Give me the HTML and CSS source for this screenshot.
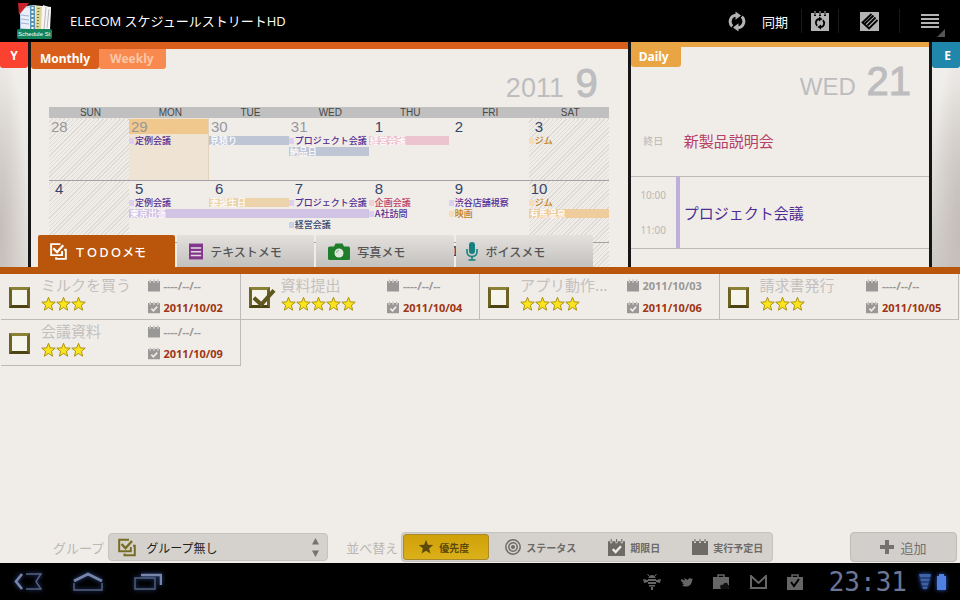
FILE: index.html
```html
<!DOCTYPE html>
<html lang="ja">
<head>
<meta charset="utf-8">
<title>ELECOM スケジュールストリートHD</title>
<link rel="stylesheet" href="styles.css">
</head>
<body>
<svg class="defs" aria-hidden="true">
  <defs>
    <linearGradient id="cover" x1="0" y1="0" x2="1" y2="0"><stop offset="0" stop-color="#8fb4dc"/><stop offset=".5" stop-color="#f4f2e4"/><stop offset="1" stop-color="#ffffff"/></linearGradient>
    <symbol id="i-sync" viewBox="0 0 18 20"><g fill="none" stroke="currentColor" stroke-width="3"><path d="M8 3.800C2.500 4 .2 11 4.200 14.800"/><path d="M10 16.200c5.500-.2 7.800-7.200 3.800-11"/></g><path fill="currentColor" d="M7.500 0l5.500 4-5.500 4.200zM10.500 20L5 16l5.500-4.200z"/></symbol>
    <symbol id="i-cal" viewBox="0 0 16 16"><path fill="currentColor" fill-rule="evenodd" d="M0 2h2v2h2V2h3v2h2V2h3v2h2V2h2v14H0z"/><path fill="currentColor" d="M2.500 0h1v3h-1zM7.500 0h1v3h-1zM12.500 0h1v3h-1z"/></symbol>
    <symbol id="i-calcheck" viewBox="0 0 16 16"><use href="#i-cal" width="16" height="16"/><path d="M4.500 9.500l2.700 2.800 5-5.500" fill="none" stroke="#eeebe7" stroke-width="2.200"/></symbol>
    <symbol id="i-star" viewBox="0 0 16 16"><path d="M8 .8l1.900 4.900 5.300.3-4.100 3.400 1.300 5.200L8 11.700l-4.400 2.900 1.300-5.200L.8 6l5.300-.3z"/></symbol>
    <symbol id="i-memo" viewBox="0 0 18 18"><path d="M11 1.200H1.200v11.600h11.600V8.500" fill="none" stroke="currentColor" stroke-width="2"/><path d="M15 7.200h1.800v9.600H6.500V15" fill="none" stroke="currentColor" stroke-width="2"/><path d="M3.500 5.500l4 4.200 6.500-7.200" fill="none" stroke="currentColor" stroke-width="2.400"/></symbol>
  </defs>
</svg>

<header class="appbar">
  <svg class="logo" viewBox="0 0 36 37" aria-hidden="true">
    <path d="M3 4l13-2 18 2-1 23H3z" fill="url(#cover)"/>
    <path d="M3 4l10 1v21l-9-1z" fill="#e9eef8"/><path d="M4 12l8 1M4 16l8 1M4 20l8 1" stroke="#9db3d8"/>
    <path d="M13 2l5 1v23l-5 1z" fill="#5b93b5"/><path d="M15.500 4v22" stroke="#fff" stroke-width="2" stroke-dasharray="2 2"/>
    <path d="M19 3l6 1-1 23-6-1z" fill="#ded59a"/><path d="M21.500 5l-1 21" stroke="#6c7440" stroke-width="2" stroke-dasharray="1 2"/>
    <path d="M26 2l8 3-2 21-7 1z" fill="#f5f5f5"/><path d="M29 4l-2 22M32 6l-2 19" stroke="#bbb"/>
    <path d="M1 0h11L2 12z" fill="#c9232c"/>
    <rect y="26" width="35" height="10" rx="2" fill="#12825a"/>
    <text x="1" y="33" class="logo-text">Schedule St</text>
  </svg>
  <h1>ELECOM スケジュールストリートHD</h1>
  <button class="bar-btn sync"><svg width="18" height="21"><use href="#i-sync"/></svg>同期</button>
  <button class="bar-btn narrow" aria-label="カレンダー同期"><svg width="18" height="20" viewBox="0 0 18 20"><path fill="currentColor" d="M0 2h3v3h2V2h3v3h2V2h3v3h2V2h3v18H0z"/><path fill="currentColor" d="M3.500 0h1v4h-1zM8.500 0h1v4h-1zM13.500 0h1v4h-1z"/><g fill="none" stroke="#000" stroke-width="1.800"><path d="M8 8c-3.500.5-4 5-1.800 6.800M10 16c3.500-.5 4-5 1.800-6.800"/></g><path d="M8 5.500l3.500 2.500L8 10.500zM10 13.500v5L6.500 16z"/></svg></button>
  <button class="bar-btn" aria-label="ELECOM"><svg width="19" height="19" viewBox="0 0 19 19"><path fill="currentColor" d="M0 0h19v19H0z"/><path d="M11.500 2L2.500 10.500l6.500 6 8.500-8.500M5 11.500l8.500-8M7.500 13.500l8-8" fill="none" stroke="#000" stroke-width="1.800"/></svg></button>
  <button class="bar-btn menu" aria-label="メニュー"><svg width="18" height="15" viewBox="0 0 18 15"><path fill="currentColor" d="M0 0h18v2H0zM0 4h18v2H0zM0 8h18v2H0zM0 12h18v2H0z"/></svg><span class="corner"></span></button>
</header>

<main>
  <section class="planner">
    <aside class="side left"><button class="side-tab red">Y</button></aside>

    <section class="panel monthly">
      <div class="panel-head">
        <div class="tabs"><button class="tab on">Monthly</button><button class="tab off">Weekly</button></div>
        <h2>2011 <b>9</b></h2>
      </div>
      <table class="calendar">
        <thead><tr><th>SUN</th><th>MON</th><th>TUE</th><th>WED</th><th>THU</th><th>FRI</th><th>SAT</th></tr></thead>
        <tbody>
          <tr>
            <td class="hatch other"><p>28</p></td>
            <td class="today other"><p>29</p><ul><li class="dot purple">定例会議</li></ul></td>
            <td class="other"><p>30</p><ul><li class="bar b-blue">見積り</li></ul></td>
            <td class="other"><p>31</p><ul><li class="dot purple">プロジェクト会議</li><li class="bar b-blue">納品日</li></ul></td>
            <td><p class="one">1</p><ul><li class="bar b-pink">経営会議</li></ul></td>
            <td><p class="one">2</p></td>
            <td class="hatch"><p class="one">3</p><ul><li class="dot orange">ジム</li></ul></td>
          </tr>
          <tr>
            <td class="hatch"><p class="one">4</p></td>
            <td><p class="one">5</p><ul><li class="dot purple">定例会議</li><li class="bar b-purple">東京出張</li></ul></td>
            <td><p class="one">6</p><ul><li class="bar b-sand">妻誕生日</li><li class="bar b-purple"></li></ul></td>
            <td><p class="one">7</p><ul><li class="dot purple">プロジェクト会議</li><li class="bar b-purple"></li><li class="dot navy">経営会議</li></ul></td>
            <td><p class="one">8</p><ul><li class="dot rose">企画会議</li><li class="dot purple">A社訪問</li></ul></td>
            <td><p class="one">9</p><ul><li class="dot purple">渋谷店舗視察</li><li class="dot orange">映画</li></ul></td>
            <td class="hatch"><p>10</p><ul><li class="dot orange">ジム</li><li class="bar b-orange">有馬温泉</li></ul></td>
          </tr>
          <tr><td class="hatch"></td><td></td><td></td><td></td><td></td><td><p>1</p></td><td class="hatch"></td></tr>
        </tbody>
      </table>
      <nav class="memo-tabs">
        <button class="memo on"><svg width="17" height="17"><use href="#i-memo"/></svg>ＴＯＤＯメモ</button>
        <button class="memo"><svg width="14" height="17" viewBox="0 0 15 17"><path fill="#83378b" d="M0 0h15v17H0z"/><path fill="#e6dbe6" d="M2 4h11v1.500H2zM2 8h11v1.500H2zM2 12h11v1.500H2z"/></svg>テキストメモ</button>
        <button class="memo photo"><svg width="22" height="17" viewBox="0 0 22 17"><path fill="#1f7d2c" d="M1.500 3.500H6L7.500.5h7l1.500 3h4.500A1.500 1.500 0 0122 5v10.500a1.500 1.500 0 01-1.500 1.500h-19A1.500 1.500 0 010 15.500V5a1.500 1.500 0 011.500-1.500z"/><circle cx="11" cy="10" r="4.500" fill="#dfe6dc"/><path d="M8.500 10a2.500 2.500 0 012.500-2.500" fill="none" stroke="#7fae83"/></svg>写真メモ</button>
        <button class="memo voice"><svg width="12" height="19" viewBox="0 0 12 19"><rect x="3" width="6" height="12" rx="3" fill="#178080"/><path d="M1 7v3c0 6 10 6 10 0V7M6 14v4M2.500 18h7" fill="none" stroke="#178080" stroke-width="1.600"/></svg>ボイスメモ</button>
      </nav>
    </section>

    <section class="panel daily">
      <div class="panel-head">
        <div class="tabs"><button class="tab gold">Daily</button></div>
        <h2>WED <b>21</b></h2>
      </div>
      <div class="slot allday"><div class="hours">終日</div><p>新製品説明会</p></div>
      <div class="slot timed"><div class="hours"><span>10:00</span><span>11:00</span></div><p>プロジェクト会議</p></div>
    </section>

    <aside class="side right"><button class="side-tab teal">E</button></aside>
  </section>

  <ul class="todos">
    <li class="todo">
      <input type="checkbox" id="t1">
      <div class="body"><label for="t1">ミルクを買う</label><div class="stars"><svg><use href="#i-star"/></svg><svg><use href="#i-star"/></svg><svg><use href="#i-star"/></svg></div></div>
      <div class="dates"><span><svg><use href="#i-cal"/></svg>----/--/--</span><span class="due"><svg><use href="#i-calcheck"/></svg>2011/10/02</span></div>
    </li>
    <li class="todo">
      <input type="checkbox" id="t2" checked>
      <div class="body"><label for="t2">資料提出</label><div class="stars"><svg><use href="#i-star"/></svg><svg><use href="#i-star"/></svg><svg><use href="#i-star"/></svg><svg><use href="#i-star"/></svg><svg><use href="#i-star"/></svg></div></div>
      <div class="dates"><span><svg><use href="#i-cal"/></svg>----/--/--</span><span class="due"><svg><use href="#i-calcheck"/></svg>2011/10/04</span></div>
    </li>
    <li class="todo">
      <input type="checkbox" id="t3">
      <div class="body"><label for="t3">アプリ動作...</label><div class="stars"><svg><use href="#i-star"/></svg><svg><use href="#i-star"/></svg><svg><use href="#i-star"/></svg><svg><use href="#i-star"/></svg></div></div>
      <div class="dates"><span><svg><use href="#i-cal"/></svg>2011/10/03</span><span class="due"><svg><use href="#i-calcheck"/></svg>2011/10/06</span></div>
    </li>
    <li class="todo">
      <input type="checkbox" id="t4">
      <div class="body"><label for="t4">請求書発行</label><div class="stars"><svg><use href="#i-star"/></svg><svg><use href="#i-star"/></svg><svg><use href="#i-star"/></svg></div></div>
      <div class="dates"><span><svg><use href="#i-cal"/></svg>----/--/--</span><span class="due"><svg><use href="#i-calcheck"/></svg>2011/10/05</span></div>
    </li>
    <li class="todo">
      <input type="checkbox" id="t5">
      <div class="body"><label for="t5">会議資料</label><div class="stars"><svg><use href="#i-star"/></svg><svg><use href="#i-star"/></svg><svg><use href="#i-star"/></svg></div></div>
      <div class="dates"><span><svg><use href="#i-cal"/></svg>----/--/--</span><span class="due"><svg><use href="#i-calcheck"/></svg>2011/10/09</span></div>
    </li>
  </ul>

  <div class="toolbar">
    <label for="group">グループ</label>
    <div class="picker">
      <svg class="olive" width="18" height="19"><use href="#i-memo"/></svg>
      <select id="group"><option>グループ無し</option></select>
      <svg class="arrows" width="7" height="19" viewBox="0 0 7 19"><path fill="#77736f" d="M3.500 0L7 6.500H0zM3.500 19L7 12.500H0z"/></svg>
    </div>
    <span class="sort-label" id="sort">並べ替え</span>
    <div class="segments" role="group" aria-labelledby="sort">
      <button class="seg on"><svg width="16" height="16"><use href="#i-star"/></svg>優先度</button>
      <button class="seg"><svg width="16" height="16" viewBox="0 0 16 16"><g fill="none" stroke="currentColor" stroke-width="1.500"><circle cx="8" cy="8" r="7.200"/><circle cx="8" cy="8" r="4.200"/></g><circle cx="8" cy="8" r="2" fill="currentColor"/></svg>ステータス</button>
      <button class="seg"><svg width="17" height="17"><use href="#i-calcheck"/></svg>期限日</button>
      <button class="seg"><svg width="16" height="16"><use href="#i-cal"/></svg>実行予定日</button>
    </div>
    <button class="add"><svg width="14" height="14" viewBox="0 0 14 14"><path fill="currentColor" d="M5 0h4v5h5v4H9v5H5V9H0V5h5z"/></svg>追加</button>
  </div>
</main>

<footer class="sysbar">
  <button aria-label="戻る"><svg width="28" height="17" viewBox="0 0 28 17"><path d="M12 1h15l-5 7.500 5 7.500H12" fill="none" stroke="#56627f" stroke-width="1.400"/><path d="M8 1L2 8.500 8 16" fill="none" stroke="#7885a8" stroke-width="2.600"/></svg></button>
  <button aria-label="ホーム"><svg width="30" height="19" viewBox="0 0 30 19"><path d="M1 11v7h28v-7" fill="none" stroke="#56627f" stroke-width="1.400"/><path d="M1 9l14-7 14 7" fill="none" stroke="#7885a8" stroke-width="2.600"/></svg></button>
  <button aria-label="最近"><svg width="28" height="17" viewBox="0 0 28 17"><path d="M1 5h20v11H1z" fill="none" stroke="#56627f" stroke-width="1.400"/><path d="M7 2h20v10" fill="none" stroke="#7885a8" stroke-width="2.600"/></svg></button>
  <div class="status">
    <svg width="18" height="16" viewBox="0 0 18 16"><path fill="currentColor" d="M5.500 4c0-4 7-4 7 0zM5 5h8v2H5zM5 8h8v2H5zM6 11h6v1.500H6zM8 13h2v3H8zM0 5l5 1v2L1 9zM18 5l-5 1v2l4 1z"/><path d="M6 2L4.500 0M12 2L13.500 0" stroke="currentColor"/></svg>
    <svg width="12" height="10" viewBox="0 0 12 10"><path fill="currentColor" d="M0 2l4 1.500L3 1l4 2c0-2 3-2.500 4-1l1 0-1 1.500C11 9 5 11 1 8.500L3 7.500 1 6l1-.5L0 4z"/></svg>
    <svg width="17" height="16" viewBox="0 0 17 16"><path d="M5 4V1h6v3" fill="none" stroke="currentColor" stroke-width="1.500"/><path fill="currentColor" d="M0 3h16v12H0z"/><path d="M8 15c-2-3 0-5 2-4 1-3 5-3 5 0 2 0 2 4 0 4z" fill="#111"/></svg>
    <svg width="17" height="14" viewBox="0 0 17 14"><path d="M1 13V1l7.500 7L16 1v12z" fill="none" stroke="currentColor" stroke-width="2"/></svg>
    <svg width="16" height="16" viewBox="0 0 16 16"><path d="M5 4V1h6v3" fill="none" stroke="currentColor" stroke-width="1.500"/><path fill="currentColor" d="M0 3h16v13H0z"/><path d="M4 8l3 4 5-7" fill="none" stroke="#000" stroke-width="2"/></svg>
  </div>
  <time>23:31</time>
  <svg class="glow" width="12" height="15" viewBox="0 0 12 15"><path fill="#3d62a8" d="M0 0h12L8 15H4z"/><path d="M1 4h10M2 8h8M3 12h6" stroke="#14254f"/></svg>
  <svg class="glow" width="9" height="16" viewBox="0 0 9 16"><path fill="#4f7fe0" d="M2 0h5v2h2v14H0V2h2z"/></svg>
</footer>
</body>
</html>
```
FILE: styles.css
```css
* { box-sizing: border-box; }

body {
  margin: 0;
  height: 100vh;
  display: flex;
  flex-direction: column;
  overflow: hidden;
  background: #f0ede9;
  font-family: "Noto Sans CJK JP", sans-serif;
  color: #333;
}

h1, h2, p, ul { margin: 0; padding: 0; }
ul { list-style: none; }
svg { display: block; flex: none; }
button, select { font: inherit; color: inherit; border: 0; background: none; padding: 0; margin: 0; }
.defs { position: absolute; width: 0; height: 0; }

/* Title bar */
.appbar {
  flex: none;
  height: 42px;
  display: flex;
  align-items: center;
  background: #000;
  color: #fff;
}
.logo { width: 36px; height: 37px; margin-left: 17px; }
.logo-text { font: 6px "Liberation Sans", sans-serif; fill: #fff; }
.appbar h1 { flex: 1; margin-left: 17px; font: 400 13px/20px "Open Sans", "Noto Sans CJK JP", sans-serif; }
.bar-btn {
  position: relative;
  width: 61px;
  height: 24px;
  display: flex;
  align-items: center;
  justify-content: center;
  border-left: 1px solid #1a1a1a;
  color: #b4b4b4;
}
.bar-btn.sync { width: auto; gap: 16px; padding-right: 13px; border: 0; font-size: 13px; color: #fff; }
.bar-btn.sync svg { color: #b4b4b4; }
.bar-btn.narrow { width: 37px; }
.corner {
  position: absolute;
  right: 15px;
  bottom: -4px;
  border: 4px solid;
  border-color: transparent #555 #555 transparent;
}

main { flex: 1; min-height: 0; display: flex; flex-direction: column; }

/* Planner: the dark background shows through the gaps as dividers */
.planner {
  height: 37.5vh;
  flex: none;
  display: flex;
  gap: 3px;
  overflow: hidden;
  background: #161616;
}
.side { flex: 0 0 28px; }
.left { background: radial-gradient(ellipse at 0 85%, #c4bdb8, #c4bdb800 70%), linear-gradient(#f0eeeb 20%, #dedbd7); }
.right { background: radial-gradient(ellipse at 100% 85%, #c4bdb8, #c4bdb800 70%), linear-gradient(#f0eeeb 20%, #cdc9c5); }
.side-tab {
  display: block;
  width: 100%;
  height: 26px;
  border-radius: 0 0 3px 3px;
  color: #fff;
  font: bold 12px "Noto Sans", sans-serif;
}
.red { background: #fb4130; }
.teal { background: #1f87ab; padding-left: 3px; }

.panel { position: relative; min-width: 0; overflow: hidden; background: #f0ede9; }
.monthly { flex: 2; border-top: 7px solid #d95e1b; }
.daily { flex: 1; border-top: 5px solid #e9a544; }
.panel-head { display: flex; justify-content: space-between; height: 58px; }
.tabs { display: flex; }
.tab {
  height: 20px;
  padding: 0 9px;
  border-radius: 0 0 3px 3px;
  color: #fff;
  font: bold 12px/18px "Noto Sans", sans-serif;
}
.tab.on { background: #d95e1b; }
.tab.off { background: #f88a50; color: #fbc7a8; padding: 0 12px 0 11px; }
.tab.gold { background: #e9a544; padding: 0 12px 0 8px; }
.panel-head h2 {
  padding: 16px 30px 0 0;
  font: 400 27px/36px "Liberation Sans", sans-serif;
  color: #bdbdbf;
}
.panel-head b { margin-left: 4px; font-size: 40px; line-height: 36px; font-weight: 400; -webkit-text-stroke: 1px #bdbdbf; }
.panel-head .gold, .daily h2 { font-size: 12px; }
.daily h2 { padding-right: 18px; font-size: 24px; }

/* Calendar */
.calendar {
  width: calc(100% - 37px);
  margin-left: 18px;
  table-layout: fixed;
  border-collapse: separate;
  border-spacing: 0;
}
.calendar th {
  height: 11px;
  padding: 0 0 0 3px;
  background: #c0c0c0;
  color: #484848;
  font: 400 10px/11px "Liberation Sans", sans-serif;
}
.calendar td { height: 62px; padding: 0; vertical-align: top; border-top: 1px solid #a2a2a6; }
.calendar tr:first-child td { border-top-color: transparent; }
.calendar td p {
  height: 15px;
  padding-left: 2px;
  font: 15px/15px "Liberation Sans", sans-serif;
  color: #35456a;
}
.calendar td p.one { padding-left: 6px; }
.calendar .other p { color: #98989c; }
.hatch { background: repeating-linear-gradient(135deg, transparent 0 2px, #dedbd7 2px 3px); }
.today { background: #efe3d3; border-right: 1px solid #e3d2ba; }
.today p { background: #f0c78c; }
.calendar ul { display: grid; gap: 2px; margin-top: 2px; }
.calendar li { height: 9px; font-size: 9px; line-height: 9px; font-weight: 500; white-space: nowrap; }
.bar { padding-left: 1px; color: #fff; }
.dot {
  padding-left: 6px;
  background: linear-gradient(var(--dot), var(--dot)) 0 2px / 5px 6px no-repeat;
}
.b-blue { background: #bec6d6; }
.b-pink { background: #ecc4d0; }
.b-purple { background: #d0c3e4; }
.b-sand { background: #ecd3ab; }
.b-orange { background: #efcc9b; }
.purple { color: #552d93; --dot: #dccff0; }
.orange { color: #c47d1c; --dot: #f6dcb8; }
.navy { color: #35456a; --dot: #c8d3e6; }
.rose { color: #bd3d62; --dot: #f3d0d8; }

/* Memo tabs lie over the foot of the calendar */
.memo-tabs {
  position: absolute;
  left: 7px;
  right: 35px;
  bottom: 0;
  display: grid;
  grid-template-columns: repeat(4, 1fr);
  gap: 2px;
}
.memo {
  height: 32px;
  padding-left: 12px;
  display: flex;
  align-items: center;
  gap: 7px;
  background: linear-gradient(#e3e0dd, #c3c1be);
  color: #555;
  font-size: 12px;
  font-weight: 500;
}
.memo.on { background: #b9560c; color: #fff; border-radius: 2px 2px 0 0; }
.memo.voice { padding-left: 10px; gap: 8px; }

/* Daily slots */
.slot { display: flex; height: 72px; align-items: center; border-bottom: 1px solid #bdbbb9; font-size: 15px; }
.hours { width: 45px; text-align: center; font-size: 10px; color: #b9b7b4; }
.allday p { margin-left: 8px; color: #b63e67; }
.timed { align-items: stretch; }
.timed .hours { display: flex; flex-direction: column; justify-content: space-around; font: 10px/14px "Noto Sans", sans-serif; }
.timed p { border-left: 4px solid #bfaedb; padding-left: 4px; color: #4d2d93; line-height: 71px; }

/* To-do cards */
.todos {
  flex: 1;
  border-top: 7px solid #b9560c;
  padding: 0 1px;
  display: grid;
  grid-template-columns: repeat(4, 1fr);
  align-content: start;
}
.todo {
  height: 46px;
  display: flex;
  align-items: center;
  padding-left: 8px;
  border-right: 1px solid #bdbbb9;
  border-bottom: 1px solid #bdbbb9;
}
.todo input {
  appearance: none;
  position: relative;
  flex: none;
  width: 21px;
  height: 21px;
  margin: 2px 11px 0 0;
  border: 3px solid #6b6224;
  border-color: #8a8136 #6b6224 #4c4412;
  background: #f6f5ec;
}
.todo input:checked::after {
  content: "";
  position: absolute;
  left: 6px;
  top: -5px;
  width: 8px;
  height: 17px;
  border: solid #5f5620;
  border-width: 0 4px 4px 0;
  transform: rotate(42deg);
}
.body { flex: 1; height: 100%; }
.body label { display: block; font-size: 15px; line-height: 22px; color: #c3c0bd; white-space: nowrap; }
.stars { display: flex; }
.stars svg { width: 15px; height: 16px; fill: #fbe41c; stroke: #a68d12; stroke-width: 1px; }
.dates { display: grid; gap: 8px; width: 92px; color: #9a9896; font: bold 11px/14px "Open Sans", sans-serif; }
.dates span { display: flex; align-items: center; gap: 4px; }
.dates svg { width: 12px; height: 13px; color: #9a9896; }
.dates .due { color: #9e3512; }

/* Toolbar */
.toolbar {
  flex: none;
  display: flex;
  align-items: center;
  padding: 0 3px 1px 53px;
  font-size: 13px;
  color: #bbb8b4;
}
.picker {
  flex: 0 1 220px;
  height: 28px;
  display: flex;
  align-items: center;
  margin: 0 18px 0 4px;
  padding: 0 8px 0 9px;
  gap: 10px;
  background: #d5d2ce;
  border: 1px solid #c6c3bf;
  border-radius: 4px;
}
.olive { color: #776d22; }
.picker select { appearance: none; flex: 1; min-width: 0; font-size: 12px; color: #222; }
.segments {
  display: flex;
  align-items: center;
  margin-left: 3px;
  padding: 1px;
  height: 30px;
  border: 1px solid #c6c3bf;
  border-radius: 4px;
  background: #d5d2ce;
}
.seg {
  height: 26px;
  padding: 0 16px;
  display: flex;
  align-items: center;
  gap: 5px;
  color: #6d6a67;
  font-size: 10px;
  font-weight: 700;
}
.seg:last-child { padding-right: 8px; }
.seg.on {
  padding: 0 19px 0 14px;
  background: linear-gradient(#cfa109, #dcb01a);
  border: 1px solid #a98a26;
  border-radius: 3px;
  color: #5c4a0c;
}
.seg svg { fill: currentColor; }
.add {
  width: 107px;
  height: 30px;
  margin-left: auto;
  display: flex;
  align-items: center;
  justify-content: center;
  gap: 6px;
  color: #75716e;
  background: #d1cecb;
  border: 1px solid #bfbcb8;
  border-radius: 4px;
}

/* System bar */
.sysbar {
  flex: none;
  height: 37px;
  display: flex;
  align-items: center;
  padding: 0 14px;
  background: #000;
}
.sysbar button { margin-right: 31px; filter: drop-shadow(0 0 2px #2f4f9a); }
.status { display: flex; align-items: center; gap: 20px; margin-left: auto; margin-right: 26px; color: #666; }
.sysbar time {
  margin-right: 12px;
  font: 26px/28px "DejaVu Sans Mono", monospace;
  color: #6b7698;
}
.glow { margin-right: 6px; filter: drop-shadow(0 0 2px #2f5fd0); }
.glow:last-child { margin-right: 0; }
```
